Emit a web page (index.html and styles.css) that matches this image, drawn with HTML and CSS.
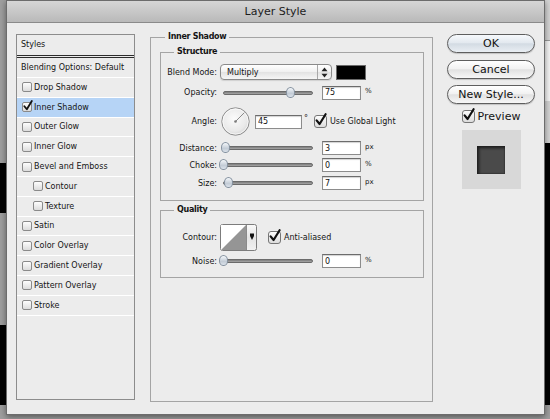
FILE: index.html
```html
<!DOCTYPE html>
<html lang="en">
<head>
  <meta charset="UTF-8" />
  <title>Layer Style</title>
  <link rel="stylesheet" href="styles.css">
</head>
<body>
  <div class="desktop">
    <div class="strip strip-l1"></div>
    <div class="strip strip-l2"></div>
    <div class="panel-r"><span class="panel-r-box"></span></div>
    <div class="strip strip-r"></div>

    <div class="window">
      <div class="titlebar">Layer Style</div>
      <div class="window-body">

        <div class="style-list">
          <div class="list-head">Styles</div>
          <div class="list-item blending">Blending Options: Default</div>
          <div class="list-item"><span class="cb"></span>Drop Shadow</div>
          <div class="list-item selected"><span class="cb"><svg class="tick" viewBox="0 0 12 13"><path d="M1.6 7.4 L4.6 11 L10.6 1.2" /></svg></span>Inner Shadow</div>
          <div class="list-item"><span class="cb"></span>Outer Glow</div>
          <div class="list-item"><span class="cb"></span>Inner Glow</div>
          <div class="list-item"><span class="cb"></span>Bevel and Emboss</div>
          <div class="list-item sub"><span class="cb"></span>Contour</div>
          <div class="list-item sub"><span class="cb"></span>Texture</div>
          <div class="list-item"><span class="cb"></span>Satin</div>
          <div class="list-item"><span class="cb"></span>Color Overlay</div>
          <div class="list-item"><span class="cb"></span>Gradient Overlay</div>
          <div class="list-item"><span class="cb"></span>Pattern Overlay</div>
          <div class="list-item"><span class="cb"></span>Stroke</div>
        </div>

        <fieldset class="settings">
          <legend>Inner Shadow</legend>

          <fieldset class="group structure">
            <legend>Structure</legend>
            <div class="row r-blend">
              <label class="lbl">Blend Mode:</label>
              <div class="select">
                <span class="select-text">Multiply</span>
                <span class="stepper">
                  <svg viewBox="0 0 7 11" width="7" height="11"><polygon points="0.5,4.2 3.5,0.6 6.5,4.2" /><polygon points="0.5,6.8 3.5,10.4 6.5,6.8" /></svg>
                </span>
              </div>
              <span class="swatch"></span>
            </div>
            <div class="row r-opacity">
              <label class="lbl">Opacity:</label>
              <div class="slider"><div class="track"></div><div class="thumb" style="--pos:75"></div></div>
              <input class="num" type="text" value="75" />
              <span class="unit">%</span>
            </div>
            <div class="row r-angle">
              <label class="lbl">Angle:</label>
              <svg class="dial" viewBox="0 0 29 29" width="29" height="29">
                <defs>
                  <radialGradient id="dialFill" cx="0.45" cy="0.4" r="0.65">
                    <stop offset="0" stop-color="#fbfbfb" />
                    <stop offset="0.7" stop-color="#e9e9e9" />
                    <stop offset="1" stop-color="#cfcfcf" />
                  </radialGradient>
                </defs>
                <circle cx="14.5" cy="14.5" r="13.7" fill="url(#dialFill)" stroke="#8c8c8c" />
                <circle cx="14.5" cy="14.5" r="12.6" fill="none" stroke="#fff" stroke-opacity="0.7" />
                <line x1="14.5" y1="14.5" x2="23.4" y2="5.6" stroke="#8a8a8a" stroke-width="1" />
                <circle cx="14.5" cy="14.5" r="1.3" fill="#7a7a7a" />
              </svg>
              <input class="num wide" type="text" value="45" />
              <span class="deg">°</span>
              <span class="cb big"><svg class="tick" viewBox="0 0 12 13"><path d="M1.6 7.4 L4.6 11 L10.6 1.2" /></svg></span>
              <span class="cb-text">Use Global Light</span>
            </div>
            <div class="row r-distance">
              <label class="lbl">Distance:</label>
              <div class="slider"><div class="track"></div><div class="thumb" style="--pos:3"></div></div>
              <input class="num" type="text" value="3" />
              <span class="unit">px</span>
            </div>
            <div class="row r-choke">
              <label class="lbl">Choke:</label>
              <div class="slider"><div class="track"></div><div class="thumb" style="--pos:0"></div></div>
              <input class="num" type="text" value="0" />
              <span class="unit">%</span>
            </div>
            <div class="row r-size">
              <label class="lbl">Size:</label>
              <div class="slider"><div class="track"></div><div class="thumb" style="--pos:6"></div></div>
              <input class="num" type="text" value="7" />
              <span class="unit">px</span>
            </div>
          </fieldset>

          <fieldset class="group quality">
            <legend>Quality</legend>
            <div class="row r-contour">
              <label class="lbl">Contour:</label>
              <svg class="contour" viewBox="0 0 37 27" width="37" height="27">
                <defs>
                  <linearGradient id="contourBtn" x1="0" y1="0" x2="0" y2="1">
                    <stop offset="0" stop-color="#fafafa" />
                    <stop offset="0.5" stop-color="#e4e4e4" />
                    <stop offset="1" stop-color="#f2f2f2" />
                  </linearGradient>
                </defs>
                <rect x="0.5" y="0.5" width="36" height="26" rx="2" fill="url(#contourBtn)" stroke="#7c7c7c" />
                <rect x="1" y="1" width="25" height="25" fill="#fff" />
                <polygon points="1,26 26,1 26,26" fill="#959595" />
                <line x1="26.5" y1="1" x2="26.5" y2="26" stroke="#8a8a8a" />
                <path d="M30 9.5 h4 v2.5 l-2 4 l-2 -4 z" fill="#111" />
              </svg>
              <span class="cb big"><svg class="tick" viewBox="0 0 12 13"><path d="M1.6 7.4 L4.6 11 L10.6 1.2" /></svg></span>
              <span class="cb-text">Anti-aliased</span>
            </div>
            <div class="row r-noise">
              <label class="lbl">Noise:</label>
              <div class="slider"><div class="track"></div><div class="thumb" style="--pos:0"></div></div>
              <input class="num" type="text" value="0" />
              <span class="unit">%</span>
            </div>
          </fieldset>
        </fieldset>

        <div class="actions">
          <button class="btn default">OK</button>
          <button class="btn">Cancel</button>
          <button class="btn">New Style...</button>
          <div class="preview-toggle">
            <span class="cb big"><svg class="tick" viewBox="0 0 12 13"><path d="M1.6 7.4 L4.6 11 L10.6 1.2" /></svg></span>
            <span>Preview</span>
          </div>
          <div class="preview-swatch"><div class="preview-inner"></div></div>
        </div>

      </div>
    </div>
  </div>
</body>
</html>
```

FILE: styles.css
```css
body {
  margin: 0;
  width: 550px;
  height: 419px;
  overflow: hidden;
  background: #9e9e9e;
  font-family: "DejaVu Sans", "Liberation Sans", sans-serif;
  font-size: 8px;
  color: #141414;
}
.desktop {
  position: relative;
  width: 550px;
  height: 419px;
}
.strip {
  position: absolute;
  background: #000;
}
.strip-l1 {
  left: 0;
  top: 163px;
  width: 6px;
  height: 50px;
}
.strip-l2 {
  left: 0;
  top: 325px;
  width: 6px;
  height: 80px;
}
.strip-r {
  right: 0;
  top: 143px;
  width: 6px;
  height: 262px;
}
.panel-r {
  position: absolute;
  right: 0;
  top: 0;
  width: 6px;
  height: 143px;
  background: #d4d4d4;
}
.panel-r-box {
  display: block;
  margin-top: 40px;
  height: 60px;
  background: #f4f4f4;
  border-top: 1px solid #999;
}

.window {
  position: absolute;
  left: 6px;
  top: 0;
  width: 539px;
  height: 415px;
  box-sizing: border-box;
  border: 1px solid #6c6c6c;
  background: #ececec;
  box-shadow: 0 2px 6px rgba(0, 0, 0, 0.45);
}
.titlebar {
  height: 22px;
  box-sizing: border-box;
  border-bottom: 1px solid #8a8a8a;
  background: linear-gradient(#d6d6d6, #b9b9b9);
  text-align: center;
  font-size: 11px;
  line-height: 21px;
  color: #1c1c1c;
}
.window-body {
  display: flex;
  align-items: flex-start;
  padding: 9px 9px 0 9px;
}

/* styles list */
.style-list {
  width: 119px;
  height: 366px;
  margin-top: 2px;
  box-sizing: border-box;
  border: 1px solid #8c8c8c;
  background: #ececec;
  flex: none;
}
.list-head {
  height: 20px;
  line-height: 20px;
  padding-left: 4px;
  border-bottom: 3px double #2c2c2c;
}
.list-item {
  height: 18.8px;
  display: flex;
  align-items: center;
  padding-left: 5px;
  border-bottom: 1px solid #fff;
}
.list-item.blending {
  height: 19px;
  padding-left: 4px;
}
.list-item.sub {
  padding-left: 16px;
}
.list-item.selected {
  background: #b6d4f6;
}

/* checkboxes */
.cb {
  position: relative;
  flex: none;
  width: 10px;
  height: 10px;
  box-sizing: border-box;
  margin-right: 2px;
  border: 1px solid #8a8a8a;
  border-radius: 2px;
  background: linear-gradient(#fdfdfd, #dcdcdc);
}
.cb.big {
  width: 13px;
  height: 13px;
  margin-right: 3px;
  border-color: #767676;
  border-radius: 3px;
}
.tick {
  position: absolute;
  left: 0;
  top: -3px;
  width: 10px;
  height: 11px;
  overflow: visible;
}
.cb.big .tick {
  left: 0;
  top: -3px;
  width: 12px;
  height: 13px;
}
.tick path {
  fill: none;
  stroke: #111;
  stroke-width: 2.2;
  stroke-linecap: round;
  stroke-linejoin: round;
}

/* settings */
fieldset {
  margin: 0;
  min-width: 0;
}
legend {
  padding: 0 3px;
  font-weight: bold;
  line-height: 10px;
  letter-spacing: -0.3px;
}
.settings {
  flex: none;
  width: 283px;
  height: 370px;
  box-sizing: border-box;
  margin-left: 15px;
  padding: 0 8px 0 9px;
  border: 1px solid #a4a4a4;
}
.settings > legend {
  margin-left: 5px;
}
.group {
  padding: 0;
  border: 1px solid #a4a4a4;
}
.group > legend {
  margin-left: 13px;
}
.structure {
  margin-top: 5px;
  padding: 5px 0 8px;
}
.quality {
  margin-top: 4px;
  padding: 7px 0 7px;
}
.row {
  display: flex;
  align-items: center;
  padding-left: 2px;
}
.r-blend { height: 20px; }
.r-opacity { height: 21px; }
.r-angle { height: 37px; }
.r-distance { height: 16px; }
.r-choke { height: 18px; }
.r-size { height: 18px; }
.r-contour { height: 30px; }
.r-noise { height: 18px; }
.lbl {
  width: 54px;
  margin-right: 3px;
  text-align: right;
  flex: none;
}

.select {
  display: flex;
  align-items: center;
  width: 112px;
  height: 16px;
  box-sizing: border-box;
  border: 1px solid #8a8a8a;
  border-radius: 4px;
  background: linear-gradient(#ffffff, #f0f0f0 50%, #e2e2e2 51%, #f6f6f6);
  box-shadow: 0 1px 1px rgba(0, 0, 0, 0.12);
}
.select-text {
  flex: 1;
  padding-left: 6px;
}
.stepper {
  width: 13px;
  height: 100%;
  display: flex;
  align-items: center;
  justify-content: center;
  border-left: 1px solid #a8a8a8;
}
.stepper polygon {
  fill: #222;
}
.swatch {
  width: 30px;
  height: 15px;
  box-sizing: border-box;
  margin-left: 4px;
  background: #000;
  border: 1px solid #6a6a6a;
}

.slider {
  position: relative;
  width: 96px;
  height: 12px;
  flex: none;
}
.track {
  position: absolute;
  left: 3px;
  right: 3px;
  top: 4px;
  height: 4px;
  box-sizing: border-box;
  border-radius: 2px;
  border: 1px solid #6b6b6b;
  background: linear-gradient(#7c7c7c, #a8a8a8);
}
.thumb {
  position: absolute;
  top: 0;
  left: calc(var(--pos) * 0.9px - 1.5px);
  width: 9px;
  height: 11px;
  box-sizing: border-box;
  border: 1px solid #8592a0;
  border-radius: 50% 50% 45% 45%;
  background: linear-gradient(#f4f7fa, #c3ccd6 60%, #dbe2ea);
}
.num {
  width: 39px;
  height: 14px;
  box-sizing: border-box;
  margin: 0 0 0 6px;
  padding: 0 2px;
  border: 1px solid #8c8c8c;
  border-top-color: #6c6c6c;
  box-shadow: inset 0 1px 1px rgba(0, 0, 0, 0.18);
  background: #fff;
  font-family: inherit;
  font-size: 8px;
  color: #111;
  outline: none;
}
.num.wide {
  width: 47px;
  margin-left: 5px;
}
.unit {
  margin-left: 4px;
  font-size: 7px;
  align-self: flex-start;
  margin-top: 2px;
}
.r-size .unit,
.r-distance .unit,
.r-choke .unit,
.r-opacity .unit,
.r-noise .unit {
  align-self: center;
  margin-top: -3px;
}
.dial {
  flex: none;
  margin-left: 1px;
}
.deg {
  width: 12px;
  padding-left: 2px;
  box-sizing: border-box;
  align-self: center;
  margin-top: -6px;
}
.cb-text {
  white-space: nowrap;
}
.contour {
  flex: none;
  margin-right: 11px;
}

/* buttons column */
.actions {
  flex: none;
  width: 88px;
  margin: 2px 0 0 14px;
  display: flex;
  flex-direction: column;
  align-items: center;
}
.btn {
  width: 88px;
  height: 19px;
  box-sizing: border-box;
  padding: 0;
  border: 1px solid #5e5e5e;
  border-radius: 10px;
  background: linear-gradient(#ffffff, #f2f2f2 45%, #e1e1e1 52%, #f7f7f7);
  box-shadow: 0 1px 1px rgba(0, 0, 0, 0.18);
  font-family: inherit;
  font-size: 11px;
  line-height: 17px;
  color: #111;
}
.btn.default {
  background: linear-gradient(#f6f9fc, #e3e9ef 45%, #d3dbe3 52%, #e9eef3);
}
.btn + .btn {
  margin-top: 6.5px;
}
.preview-toggle {
  display: flex;
  align-items: center;
  margin-top: 5px;
  height: 15px;
  font-size: 11px;
}
.preview-swatch {
  width: 59px;
  height: 59px;
  margin-top: 6px;
  display: flex;
  align-items: center;
  justify-content: center;
  background: #d8d8d8;
}
.preview-inner {
  width: 28px;
  height: 28px;
  background: #4a4a4a;
  box-shadow: inset 2px 2px 3px #1c1c1c, inset -1px -1px 1px #3a3a3a;
}
```
